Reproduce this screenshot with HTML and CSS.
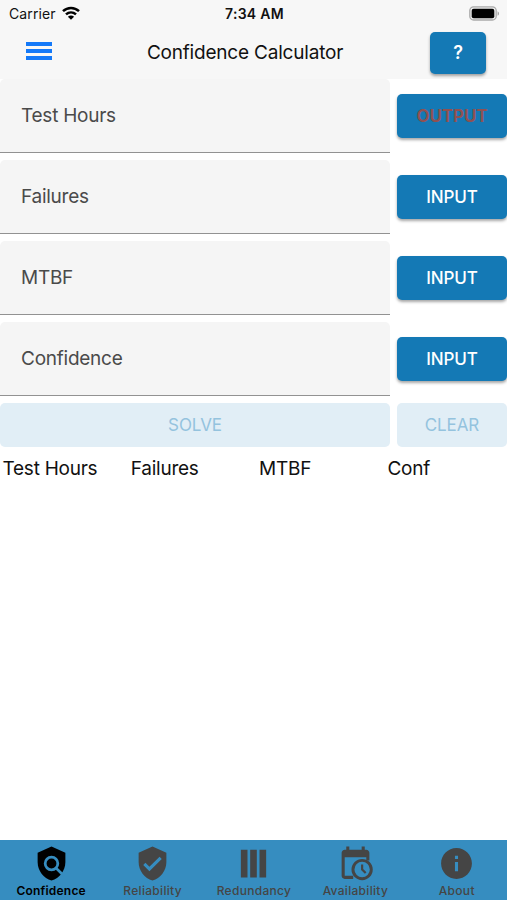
FILE: index.html
```html
<!DOCTYPE html>
<html lang="en">
<head>
  <meta charset="UTF-8" />
  <meta name="viewport" content="width=device-width, initial-scale=1.0"/>
  <title>Confidence Calculator</title>
  <link rel="stylesheet" href="styles.css">
</head>
<body>

  <!-- Status bar -->
  <div class="status-bar">
    <div class="carrier">
      <span>Carrier</span>
      <svg width="18" height="14" viewBox="0 0 18 14" fill="none" stroke="#000" stroke-width="2.5">
        <path d="M1 5.2C5.6 .8 12.4 .8 17 5.2"/>
        <path d="M4 8.4C6.9 5.7 11.1 5.7 14 8.4"/>
        <path d="M9 13.7L5.9 10.7C7.7 9.1 10.3 9.1 12.1 10.7Z" fill="#000" stroke="none"/>
      </svg>
    </div>
    <div class="time">7:34 AM</div>
    <div class="battery">
      <svg width="31" height="15" viewBox="0 0 31 15">
        <rect x=".8" y=".8" width="26.4" height="13.2" rx="3.8" fill="#ededed" stroke="#aaa" stroke-width="1.3"/>
        <rect x="2.7" y="2.7" width="22.6" height="9.6" rx="2" fill="#000"/>
        <path d="M28.6 5.2C30.4 6 30.4 9 28.6 9.8Z" fill="#999"/>
      </svg>
    </div>
  </div>

  <!-- Header -->
  <header class="header">
    <button class="menu-btn" aria-label="Menu"><span></span><span></span><span></span></button>
    <h1>Confidence Calculator</h1>
    <button class="btn help-btn">?</button>
  </header>

  <main class="content">
    <div class="row">
      <div class="field">Test Hours</div>
      <button class="btn output">OUTPUT</button>
    </div>
    <div class="row">
      <div class="field">Failures</div>
      <button class="btn">INPUT</button>
    </div>
    <div class="row">
      <div class="field">MTBF</div>
      <button class="btn">INPUT</button>
    </div>
    <div class="row">
      <div class="field">Confidence</div>
      <button class="btn">INPUT</button>
    </div>
    <div class="row">
      <button class="btn solve" disabled>SOLVE</button>
      <button class="btn" disabled>CLEAR</button>
    </div>

    <div class="results">
      <span>Test Hours</span>
      <span>Failures</span>
      <span>MTBF</span>
      <span>Conf</span>
    </div>
  </main>

  <!-- Bottom tabs -->
  <nav class="tabs">
    <a class="tab active">
      <svg viewBox="0 0 24 24">
        <path d="M12 1L3 5v6c0 5.55 3.84 10.74 9 12 5.16-1.26 9-6.45 9-12V5l-9-4z"/>
        <g class="lens"><circle cx="12" cy="12" r="4.1"/><path d="M15 15l5 5"/></g>
      </svg>
      <span>Confidence</span>
    </a>
    <a class="tab">
      <svg viewBox="0 0 24 24"><path d="M12 1L3 5v6c0 5.55 3.84 10.74 9 12 5.16-1.26 9-6.45 9-12V5l-9-4zm-2 16l-4-4 1.41-1.41L10 14.17l6.59-6.59L18 9l-8 8z"/></svg>
      <span>Reliability</span>
    </a>
    <a class="tab">
      <svg viewBox="0 0 24 24"><path d="M3.8 3h4.3v18H3.8zM9.85 3h4.3v18h-4.3zM15.9 3h4.3v18h-4.3z"/></svg>
      <span>Redundancy</span>
    </a>
    <a class="tab">
      <svg viewBox="0 0 24 24">
        <path d="M5 22h5.5v-2H5V8h14v2h2V5c0-1.1-.9-2-2-2h-1V1h-2v2H8V1H6v2H5c-1.1 0-2 .9-2 2v15c0 1.1.9 2 2 2z"/>
        <path d="M16.3 9a6.9 6.9 0 1 0 0 13.8 6.9 6.9 0 0 0 0-13.8zm0 11.9a5 5 0 1 1 0-10 5 5 0 0 1 0 10zM15.6 12.6v3.6l2.5 2.5 1-1-2.1-2.1v-3z"/>
      </svg>
      <span>Availability</span>
    </a>
    <a class="tab">
      <svg viewBox="0 0 24 24"><path d="M12 2C6.48 2 2 6.48 2 12s4.48 10 10 10 10-4.48 10-10S17.52 2 12 2zm1 15h-2v-6h2v6zm0-8h-2V7h2v2z"/></svg>
      <span>About</span>
    </a>
  </nav>

</body>
</html>
```
FILE: styles.css
```css
* {
  box-sizing: border-box;
}

body {
  margin: 0;
  height: 100vh;
  display: flex;
  flex-direction: column;
  overflow: hidden;
  background: #fff;
  color: #111;
  font-family: Inter, Roboto, sans-serif;
}

.status-bar {
  height: 26px;
  padding: 0 7px 0 9px;
  display: grid;
  grid-template-columns: 1fr auto 1fr;
  align-items: center;
  background: #f7f7f7;
  font-size: 14px;
}

.carrier {
  display: flex;
  align-items: center;
  gap: 6px;
  letter-spacing: 0.1px;
}

.time {
  font-weight: 600;
  letter-spacing: 0.3px;
}

.battery {
  display: flex;
  justify-content: flex-end;
}

.header {
  height: 53px;
  padding: 5px 21px 5px 26px;
  display: grid;
  grid-template-columns: 1fr auto 1fr;
  align-items: center;
  background: #f7f7f7;
}

.header h1 {
  margin: 0 22px 0 0;
  font-size: 19px;
  font-weight: 400;
  letter-spacing: -0.2px;
}

.menu-btn {
  width: 26px;
  margin-bottom: 4px;
  padding: 0;
  display: flex;
  flex-direction: column;
  gap: 3px;
  border: none;
  background: none;
}

.menu-btn span {
  height: 4px;
  background: #1479f8;
}

.btn {
  width: 110px;
  height: 44px;
  padding: 0;
  border: none;
  border-radius: 5px;
  background: #1479b5;
  color: #fff;
  font-family: inherit;
  font-size: 17px;
  font-weight: 500;
  letter-spacing: -0.1px;
  box-shadow: 0 2px 3px rgba(0, 0, 0, 0.35);
}

.btn:disabled {
  background: #e1eef6;
  color: #94c3de;
  font-weight: 400;
  box-shadow: none;
}

.help-btn {
  width: 56px;
  height: 42px;
  justify-self: end;
  font-size: 18px;
  font-weight: 600;
}

.output {
  color: #8f5152;
  font-weight: 700;
}

.content {
  flex: 1;
}

.row {
  display: flex;
  align-items: center;
  gap: 7px;
  margin-bottom: 7px;
}

.field {
  width: 390px;
  height: 74px;
  padding: 0 21px;
  display: flex;
  align-items: center;
  border-bottom: 1px solid #929292;
  border-radius: 5px 5px 0 0;
  background: #f5f5f5;
  color: #4a4a4a;
  font-size: 19px;
  letter-spacing: -0.25px;
}

.solve {
  width: 390px;
}

.results {
  padding: 1px 0 0 2.5px;
  display: grid;
  grid-template-columns: repeat(4, 128.3px);
  font-size: 19px;
  line-height: 28px;
  letter-spacing: -0.25px;
}

.tabs {
  height: 60px;
  display: grid;
  grid-template-columns: repeat(5, 1fr);
  background: #368dc0;
}

.tab {
  padding: 5px 0 0 1px;
  display: flex;
  flex-direction: column;
  align-items: center;
  color: #454545;
  font-size: 12px;
  font-weight: 500;
  letter-spacing: 0.3px;
}

.tab svg {
  width: 37px;
  height: 37px;
  fill: currentColor;
}

.tab .lens {
  fill: none;
  stroke: #368dc0;
  stroke-width: 1.8;
}

.tab span {
  line-height: 17px;
}

.tab.active {
  color: #000;
  font-weight: 600;
  letter-spacing: 0.2px;
}
```
